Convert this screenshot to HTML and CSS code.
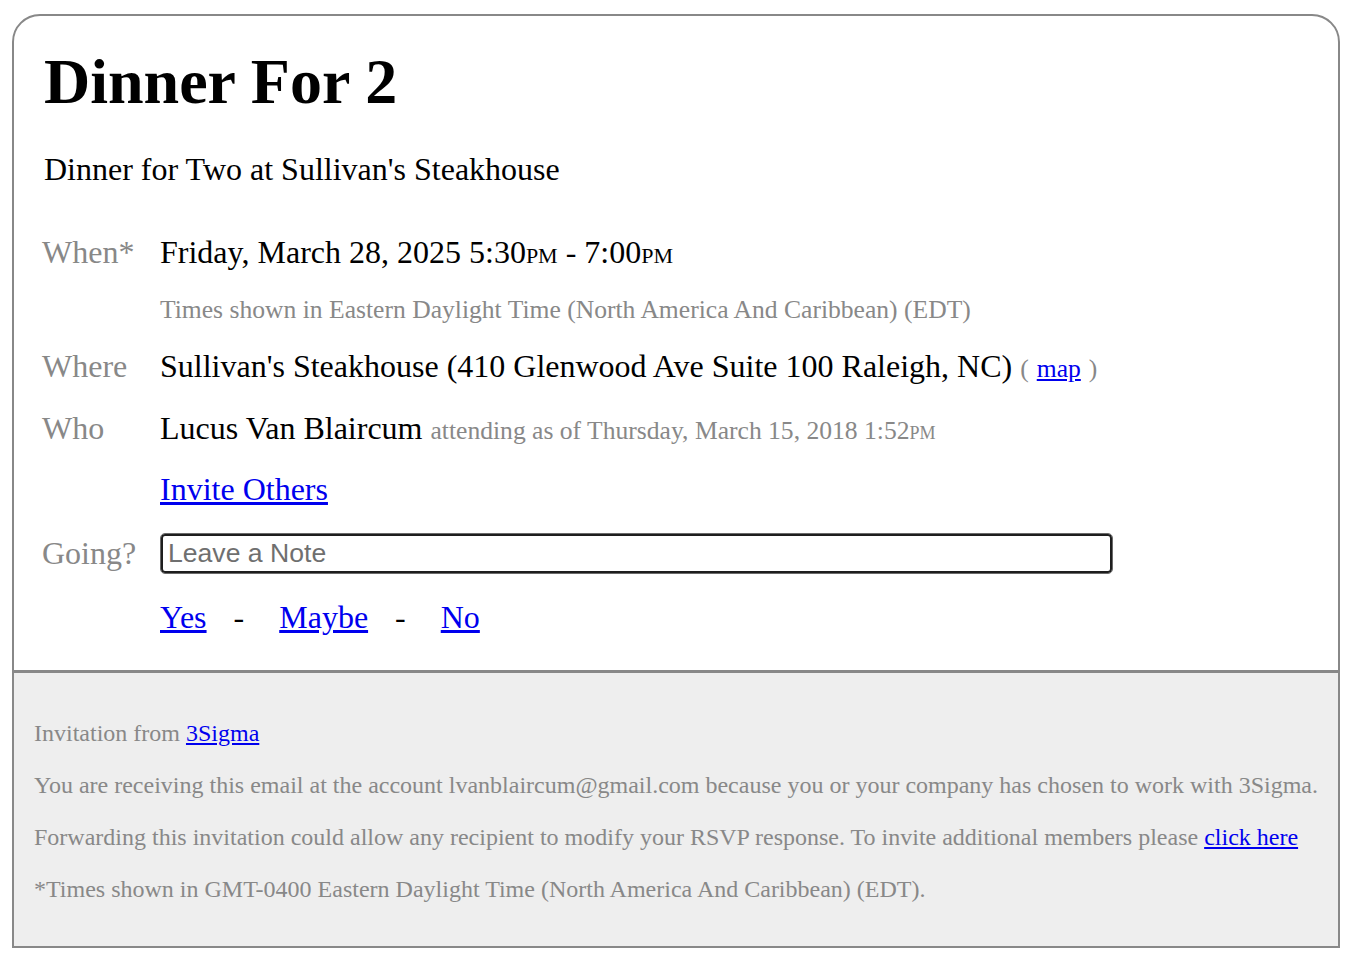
FILE: index.html
```html
<!DOCTYPE html>
<html lang="en">
<head>
<meta charset="utf-8">
<title>Dinner For 2</title>
<link rel="stylesheet" href="styles.css">
</head>
<body>
<div class="card">
  <div class="main">
    <div class="heading">
      <h1 class="title">Dinner For 2</h1>
      <p class="subtitle">Dinner for Two at Sullivan's Steakhouse</p>
    </div>
    <div class="details">
      <div class="row row-when">
        <span class="label">When*</span>
        <span class="value">Friday, March 28, 2025 5:30<span class="sc">pm</span> - 7:00<span class="sc">pm</span></span>
      </div>
      <div class="row row-note">
        <span class="label"></span>
        <span class="value note">Times shown in Eastern Daylight Time (North America And Caribbean) (EDT)</span>
      </div>
      <div class="row row-where">
        <span class="label">Where</span>
        <span class="value">Sullivan's Steakhouse (410 Glenwood Ave Suite 100 Raleigh, NC) <span class="small">(</span> <a class="small-link" href="#">map</a> <span class="small">)</span></span>
      </div>
      <div class="row row-who">
        <span class="label">Who</span>
        <span class="value">Lucus Van Blaircum <span class="small">attending as of Thursday, March 15, 2018 1:52<span class="sc">pm</span></span></span>
      </div>
      <div class="row row-invite">
        <span class="label"></span>
        <span class="value"><a href="#">Invite Others</a></span>
      </div>
      <div class="row row-going">
        <span class="label">Going?</span>
        <span class="value"><input class="note-input" type="text" placeholder="Leave a Note"></span>
      </div>
      <div class="row row-rsvp">
        <span class="label"></span>
        <span class="value rsvp"><a href="#">Yes</a><span class="dash">-</span><a href="#">Maybe</a><span class="dash">-</span><a href="#">No</a></span>
      </div>
    </div>
  </div>
  <div class="footer">
    <p>Invitation from <a href="#">3Sigma</a></p>
    <p>You are receiving this email at the account lvanblaircum@gmail.com because you or your company has chosen to work with 3Sigma.</p>
    <p>Forwarding this invitation could allow any recipient to modify your RSVP response. To invite additional members please <a href="#">click here</a></p>
    <p>*Times shown in GMT-0400 Eastern Daylight Time (North America And Caribbean) (EDT).</p>
  </div>
</div>
</body>
</html>
```
FILE: styles.css
```css
html, body {
  margin: 0;
  padding: 0;
  background: #fff;
}

body {
  font-family: "Liberation Serif", "Times New Roman", serif;
  color: #000;
}

a {
  color: #0000ee;
  text-decoration: underline;
}

.card {
  box-sizing: border-box;
  width: 1328px;
  margin: 14px 0 0 12px;
  border: 2px solid #888;
  border-radius: 28px 28px 0 0;
  overflow: hidden;
  background: #fff;
}

.main {
  padding: 29px 28px 33px 28px;
}

.heading {
  padding-left: 2px;
}

.title {
  margin: 0;
  font-size: 64px;
  line-height: 74px;
  font-weight: bold;
}

.subtitle {
  margin: 30px 0 0 0;
  font-size: 32px;
  line-height: 40px;
}

.details {
  margin-top: 43px;
}

.row {
  display: flex;
  align-items: baseline;
  font-size: 32px;
  line-height: 40px;
}

.label {
  flex: 0 0 118px;
  color: #888;
}

.value {
  flex: 1 1 auto;
}

.sc {
  font-variant: small-caps;
}

.small {
  font-size: 25.6px;
  line-height: 1;
  color: #888;
}

.small-link {
  font-size: 25.6px;
  line-height: 1;
}

.note {
  font-size: 25.6px;
  color: #888;
}

.row-note { margin-top: 18px; }
.row-where { margin-top: 16px; }
.row-who { margin-top: 22px; }
.row-invite { margin-top: 21px; }
.row-going {
  margin-top: 24px;
  align-items: center;
  height: 40px;
}
.row-rsvp { margin-top: 24px; }

.row-going .value {
  display: flex;
}

.note-input {
  box-sizing: border-box;
  width: 953px;
  height: 41px;
  margin: 0;
  padding: 0 7px;
  border: 1px solid #6a6a6a;
  box-shadow: inset 0 0 0 2px #1e1e1e;
  border-radius: 5px;
  font-family: "Liberation Sans", Arial, sans-serif;
  font-size: 26.6px;
  color: #000;
  background: #fff;
  outline: none;
}

.note-input::placeholder {
  color: #6f6f6f;
}

.rsvp {
  display: flex;
  align-items: baseline;
}

.dash {
  margin: 0 35px 0 27px;
  color: #000;
}

.footer {
  border-top: 3px solid #888;
  background: #eee;
  padding: 46px 8px 43px 20px;
  color: #888;
  font-size: 24px;
  line-height: 28px;
}

.footer p {
  margin: 0 0 24px 0;
  white-space: nowrap;
}

.footer p:last-child {
  margin-bottom: 0;
}
```
